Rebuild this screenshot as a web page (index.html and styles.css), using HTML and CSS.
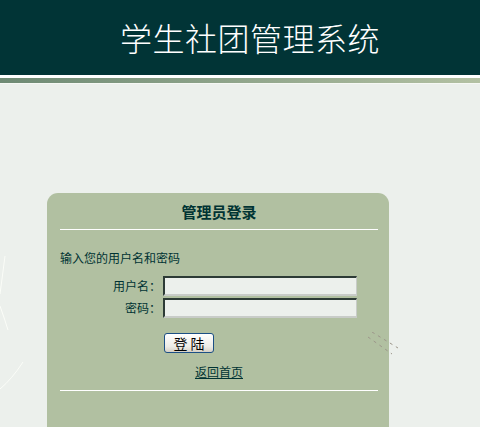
FILE: index.html
```html
<!DOCTYPE html>
<html lang="zh-CN">
<head>
    <meta charset="UTF-8">
    <title>学生社团管理系统</title>
    <link rel="stylesheet" href="styles.css">
</head>
<body>
    <div class="top">
        <h1>学生社团管理系统</h1>
    </div>
    <div class="rule-white"></div>
    <div class="rule-band"></div>
    <div class="page">
        <svg class="deco-left" width="60" height="200" viewBox="0 0 60 200">
            <path d="M5 22 Q2 45 0 60" stroke="#fbfdf8" stroke-width="1" fill="none"/>
            <path d="M0 72 Q5 86 8 96" stroke="#fbfdf8" stroke-width="1" fill="none"/>
            <path d="M23 128 Q12 145 0 155" stroke="#fbfdf8" stroke-width="1" fill="none"/>
        </svg>
        <svg class="deco-right" width="30" height="24" viewBox="0 0 30 24">
            <path d="M4 0 L30 16 M0 5 L24 22" stroke="#9c968a" stroke-width="1" stroke-dasharray="3 4" fill="none"/>
        </svg>
        <div class="card">
            <div class="card-title">管理员登录</div>
            <div class="line"></div>
            <p class="hint">输入您的用户名和密码</p>
            <div class="form">
                <label class="label" for="user">用户名：</label>
                <input class="field" id="user" type="text">
                <label class="label" for="pwd">密码：</label>
                <input class="field" id="pwd" type="password">
            </div>
            <div class="actions">
                <button class="btn">登 陆</button>
            </div>
            <div class="back"><a href="#">返回首页</a></div>
            <div class="line"></div>
        </div>
    </div>
</body>
</html>
```

FILE: styles.css
```css
body {
    margin: 0;
    background-color: #ecf0ec;
    font-family: "Noto Sans CJK SC", "DejaVu Sans", sans-serif;
    color: #003333;
    font-size: 12px;
    overflow: hidden;
}
.top {
    height: 75px;
    background-color: #013436;
}
.top h1 {
    margin: 0;
    padding: 17px 0 0 120px;
    font-size: 32px;
    line-height: 40px;
    font-weight: 300;
    color: #ffffff;
    letter-spacing: 0.5px;
}
.rule-white {
    height: 3px;
    background-color: #ffffff;
}
.rule-band {
    height: 5px;
    background: linear-gradient(to right, #6e8a74, #b3c1a3);
    border-bottom: 1px solid #f6f8f4;
}
.page {
    position: relative;
    padding: 109px 0 0 47px;
}
.deco-left {
    position: absolute;
    left: 0;
    top: 150px;
}
.deco-right {
    position: absolute;
    left: 368px;
    top: 248px;
}
.card {
    width: 342px;
    height: 260px;
    background-color: #b1c0a1;
    border-radius: 11px;
    padding: 0 11px 0 13px;
    box-sizing: border-box;
}
.card-title {
    padding-top: 9px;
    height: 27px;
    text-align: center;
    font-size: 15px;
    font-weight: bold;
    line-height: 20px;
}
.line {
    height: 1px;
    background-color: #ffffff;
}
.hint {
    margin: 19px 0 0 0;
    line-height: 18px;
}
.form {
    display: grid;
    grid-template-columns: 101px 194px;
    column-gap: 2px;
    row-gap: 2px;
    margin-top: 9px;
    align-items: center;
}
.label {
    text-align: right;
    line-height: 20px;
}
.field {
    box-sizing: border-box;
    width: 194px;
    height: 20px;
    margin: 0;
    padding: 0 2px;
    background-color: #ecf0ec;
    border-style: solid;
    border-width: 2px 1px 2px 2px;
    border-color: #2d3b36 #c8ccc8 #c8ccc8 #2d3b36;
    outline: none;
}
.actions {
    margin: 15px 0 0 104px;
}
.btn {
    box-sizing: border-box;
    width: 50px;
    height: 20px;
    padding: 0;
    font-family: "Noto Sans CJK SC", sans-serif;
    font-size: 14px;
    line-height: 16px;
    color: #000000;
    background: linear-gradient(#ffffff, #ecebe6 70%, #d6d0c5);
    border: 1px solid #1c4f85;
    border-radius: 3px;
}
.back {
    text-align: center;
    margin: 11px 0 10px 0;
    line-height: 16px;
}
.back a {
    color: #003333;
    font-size: 12px;
}
```
